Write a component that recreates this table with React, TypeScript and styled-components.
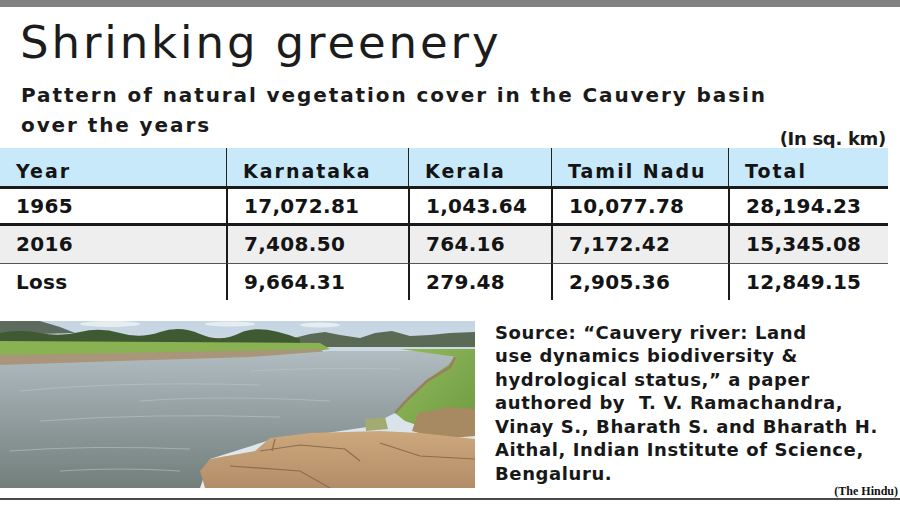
import React from "react";
import styled, { createGlobalStyle } from "styled-components";

const GlobalStyle = createGlobalStyle`
  html, body {
    margin: 0;
    padding: 0;
    background: #ffffff;
    overflow: hidden;
  }
`;

const Page = styled.div`
  width: 900px;
  height: 508px;
  background: #ffffff;
  color: #1a1a1a;
  font-family: "DejaVu Sans", "Noto Sans", sans-serif;
  display: flex;
  flex-direction: column;
`;

const TopBar = styled.div`
  height: 7px;
  background: #828282;
`;

const Title = styled.h1`
  margin: 0;
  padding: 7px 0 0 20px;
  height: 67px;
  font-size: 45px;
  line-height: 58px;
  font-weight: 400;
  letter-spacing: 2.9px;
  color: #1c1c1c;
`;

const HeadRow = styled.div`
  display: flex;
  justify-content: space-between;
  align-items: flex-end;
  height: 67px;
  padding: 0 14px 0 21px;
`;

const Subtitle = styled.div`
  font-size: 20px;
  line-height: 30px;
  font-weight: 700;
  letter-spacing: 1.9px;
  padding-bottom: 8px;
`;

const Unit = styled.div`
  font-size: 18px;
  line-height: 18px;
  font-weight: 700;
  letter-spacing: -0.3px;
`;

const Table = styled.div`
  width: 888px;
  display: grid;
  grid-template-columns: 226px 182px 143px 177px 160px;
`;

const Row = styled.div<{ $bg: string; $border: string; $height: number; $padTop: number }>`
  display: contents;
  & > div {
    background: ${(p) => p.$bg};
    border-bottom: ${(p) => p.$border};
    height: ${(p) => p.$height}px;
    padding-top: ${(p) => p.$padTop}px;
  }
`;

const Cell = styled.div<{ $head?: boolean; $first?: boolean }>`
  display: flex;
  align-items: center;
  padding-left: 16px;
  border-left: ${(p) => (p.$first ? "none" : p.$head ? "1.5px solid #222" : "2px solid #1a1a1a")};
  font-size: ${(p) => (p.$head ? 19 : 20)}px;
  font-weight: 700;
  letter-spacing: ${(p) => (p.$head ? "2px" : "0.3px")};
  color: #141414;
  box-sizing: border-box;
`;

const Bottom = styled.div`
  display: flex;
  align-items: flex-start;
  margin-top: 21px;
  position: relative;
`;

const Photo = styled.svg`
  display: block;
  flex: none;
`;

const Source = styled.div`
  margin-left: 20px;
  font-size: 18px;
  line-height: 23.6px;
  font-weight: 700;
  letter-spacing: 0.6px;
  color: #181818;
`;

const Credit = styled.div`
  position: absolute;
  right: 2px;
  bottom: -11px;
  font-family: "Liberation Serif", serif;
  font-weight: 700;
  font-size: 12px;
  color: #111;
`;

const Rule = styled.div`
  margin-top: 10px;
  height: 2px;
  background: #4a4a4a;
`;

const headers = ["Year", "Karnataka", "Kerala", "Tamil Nadu", "Total"];
const rows = [
  { cells: ["1965", "17,072.81", "1,043.64", "10,077.78", "28,194.23"], bg: "#ffffff", border: "3px solid #1a1a1a", h: 37 },
  { cells: ["2016", "7,408.50", "764.16", "7,172.42", "15,345.08"], bg: "#eeeeee", border: "1.5px solid #555", h: 37.5 },
  { cells: ["Loss", "9,664.31", "279.48", "2,905.36", "12,849.15"], bg: "#ffffff", border: "none", h: 36 },
];

const RiverPhoto: React.FC = () => (
  <Photo width={475} height={167} viewBox="0 0 475 167">
    <defs>
      <linearGradient id="sky" x1="0" y1="0" x2="0" y2="1">
        <stop offset="0" stopColor="#c6d5e3" />
        <stop offset="1" stopColor="#e6ecef" />
      </linearGradient>
      <linearGradient id="water" x1="0" y1="0" x2="0" y2="1">
        <stop offset="0" stopColor="#b0bcc0" />
        <stop offset="0.4" stopColor="#97a3a5" />
        <stop offset="1" stopColor="#737f7b" />
      </linearGradient>
      <linearGradient id="rock" x1="0" y1="0" x2="0" y2="1">
        <stop offset="0" stopColor="#cda87d" />
        <stop offset="1" stopColor="#b38d67" />
      </linearGradient>
      <linearGradient id="grass" x1="0" y1="0" x2="1" y2="1">
        <stop offset="0" stopColor="#93bb5c" />
        <stop offset="1" stopColor="#6f9a42" />
      </linearGradient>
    </defs>
    <rect width="475" height="167" fill="url(#sky)" />
    <ellipse cx="110" cy="3" rx="30" ry="3" fill="#eef2f4" opacity="0.8" />
    <ellipse cx="230" cy="3" rx="25" ry="2.5" fill="#eef2f4" opacity="0.8" />
    <ellipse cx="320" cy="4" rx="20" ry="2.5" fill="#eef2f4" opacity="0.8" />
    <path d="M0 0 L40 0 L60 6 L75 12 L0 14 Z" fill="#5d6b5e" />
    <path d="M290 18 L310 13 L325 11 L340 14 L360 17 L375 12 L392 10 L410 15 L430 14 L450 12 L475 11 L475 26 L290 26 Z" fill="#5a6a55" />
    <path d="M0 12 Q20 8 40 12 T80 11 T120 12 T160 11 T200 13 T240 12 T300 18 L300 24 L0 24 Z" fill="#3f5a32" />
    <path d="M0 20 L320 22 L330 28 L300 33 L200 36 L100 38 L0 40 Z" fill="#8ab253" />
    <path d="M0 34 L120 32 L230 30 L320 28 L325 32 L250 37 L120 42 L0 46 Z" fill="#a8957a" />
    <path d="M0 44 L120 40 L250 36 L330 30 L420 30 L455 36 L450 46 L427 60 L408 78 L395 92 L367 106 L300 116 L273 118 L210 138 L200 167 L0 167 Z" fill="url(#water)" />
    <path d="M20 70 Q120 60 260 64 M40 100 Q150 92 280 96 M10 130 Q90 124 190 128 M140 80 Q220 74 330 80 M60 150 Q120 146 180 150 M250 50 Q320 46 400 48" stroke="#bdc8c8" strokeWidth="1" fill="none" opacity="0.55" />
    <path d="M400 28 L475 28 L475 110 L440 112 L405 100 L395 92 L410 76 L428 58 L448 44 L456 36 Z" fill="url(#grass)" />
    <path d="M455 36 L450 46 L427 60 L408 78 L395 92" stroke="#9a7f5c" strokeWidth="2.5" fill="none" />
    <path d="M418 92 L450 86 L475 88 L475 115 L440 118 L412 110 Z" fill="#a88a62" />
    <path d="M270 117 L310 112 L380 110 L420 112 L475 118 L475 167 L205 167 L200 150 L210 138 L255 130 Z" fill="url(#rock)" />
    <path d="M260 130 L300 124 L345 128 L360 140 M230 145 L300 150 L330 167 M380 122 L420 135 L475 138 M275 118 L272 130" stroke="#8c6d4f" strokeWidth="1.2" fill="none" />
    <path d="M365 98 L385 96 L388 108 L366 110 Z" fill="#a3aa72" />
  </Photo>
);

const App: React.FC = () => {
  return (
    <>
      <GlobalStyle />
      <Page>
        <TopBar />
        <Title>Shrinking greenery</Title>
        <HeadRow>
          <Subtitle>
            Pattern of natural vegetation cover in the Cauvery basin
            <br />
            over the years
          </Subtitle>
          <Unit>(In sq. km)</Unit>
        </HeadRow>
        <Table>
          <Row $bg="#c8e9f9" $border="3px solid #1a1a1a" $height={41} $padTop={8}>
            {headers.map((h, i) => (
              <Cell key={h} $head $first={i === 0}>
                {h}
              </Cell>
            ))}
          </Row>
          {rows.map((r) => (
            <Row key={r.cells[0]} $bg={r.bg} $border={r.border} $height={r.h} $padTop={0}>
              {r.cells.map((c, i) => (
                <Cell key={i} $first={i === 0}>
                  {c}
                </Cell>
              ))}
            </Row>
          ))}
        </Table>
        <Bottom>
          <RiverPhoto />
          <Source>
            Source: “Cauvery river: Land
            <br />
            use dynamics biodiversity &amp;
            <br />
            hydrological status,” a paper
            <br />
            authored by&nbsp; T. V. Ramachandra,
            <br />
            Vinay S., Bharath S. and Bharath H.
            <br />
            Aithal, Indian Institute of Science,
            <br />
            Bengaluru.
          </Source>
          <Credit>(The Hindu)</Credit>
        </Bottom>
        <Rule />
      </Page>
    </>
  );
};

export default App;
